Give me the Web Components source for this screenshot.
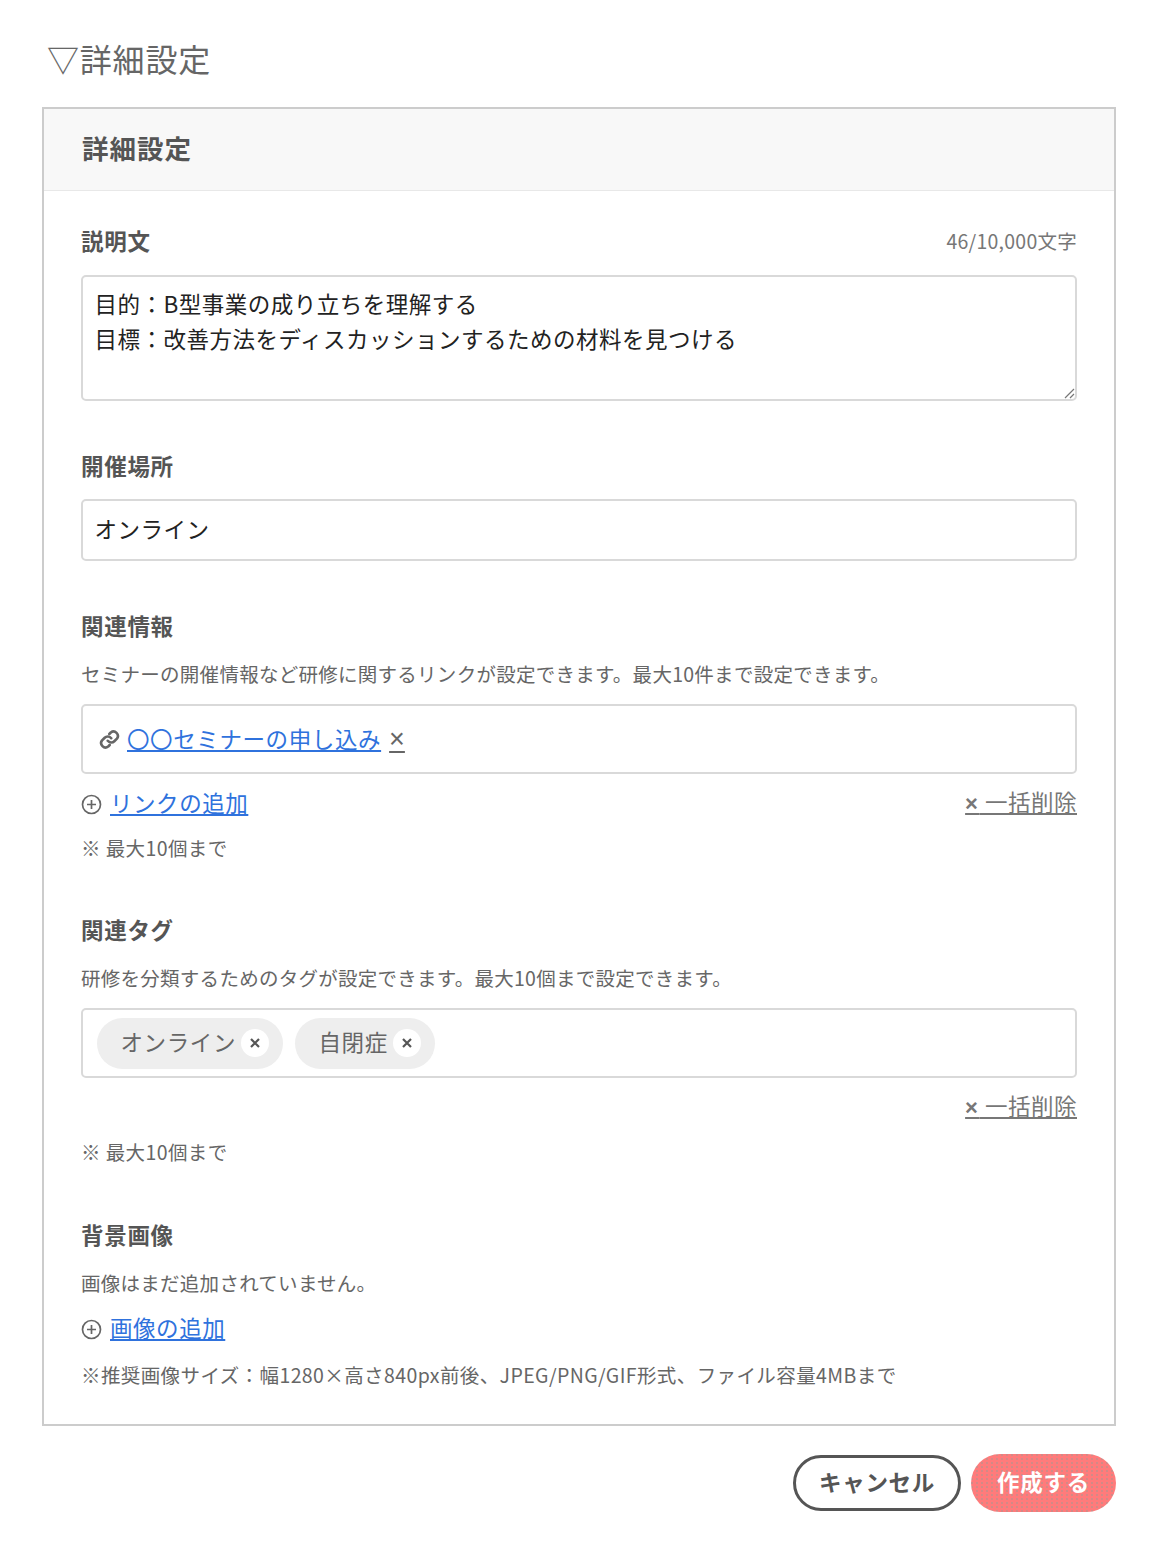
<!DOCTYPE html>
<html lang="ja"><head><meta charset="utf-8"><title>詳細設定</title>
<style>
html,body{margin:0;background:#fff}
body{font-family:"Noto Sans CJK JP","Noto Sans",sans-serif;color:#555}
</style></head><body>
<settings-page>
<settings-panel heading="詳細設定">
  <form-field label="説明文" counter="46/10,000文字" gap="18">
    <text-box multiline>目的：B型事業の成り立ちを理解する<br>目標：改善方法をディスカッションするための材料を見つける</text-box>
  </form-field>
  <form-field label="開催場所" top="51" gap="17">
    <text-box>オンライン</text-box>
  </form-field>
  <form-field label="関連情報" top="51" gap="17">
    <help-text slot="desc">セミナーの開催情報など研修に関するリンクが設定できます。最大10件まで設定できます。</help-text>
    <item-box>
      <link-item>〇〇セミナーの申し込み</link-item>
    </item-box>
    <action-row add="リンクの追加" clear></action-row>
    <help-text note>※ 最大10個まで</help-text>
  </form-field>
  <form-field label="関連タグ" top="53" gap="17">
    <help-text slot="desc">研修を分類するためのタグが設定できます。最大10個まで設定できます。</help-text>
    <item-box>
      <tag-chip>オンライン</tag-chip>
      <tag-chip>自閉症</tag-chip>
    </item-box>
    <action-row clear></action-row>
    <help-text note>※ 最大10個まで</help-text>
  </form-field>
  <form-field label="背景画像" top="54" gap="17">
    <help-text slot="desc">画像はまだ追加されていません。</help-text>
    <action-row add="画像の追加" tight></action-row>
    <help-text note last>※推奨画像サイズ：幅1280×高さ840px前後、JPEG/PNG/GIF形式、ファイル容量4MBまで</help-text>
  </form-field>
</settings-panel>
<div slot="actions" style="display:contents">
  <pill-button>キャンセル</pill-button>
  <pill-button primary>作成する</pill-button>
</div>
</settings-page>
<script>
const FONT='"Noto Sans CJK JP","Noto Sans",sans-serif';
function def(name,render){
  customElements.define(name,class extends HTMLElement{
    constructor(){super();this.attachShadow({mode:'open'})}
    connectedCallback(){this.shadowRoot.innerHTML=render(this)}
  });
}
def('settings-page',()=>`<style>
:host{display:block;padding:38px 42px 36px;font-family:${FONT}}
h1{margin:0 0 29px 5px;font-size:32px;line-height:40px;font-weight:400;color:#666;letter-spacing:.8px}
.actions{display:flex;justify-content:flex-end;align-items:center;gap:10px;margin-top:28px}
</style><h1>▽詳細設定</h1><slot></slot><div class="actions"><slot name="actions"></slot></div>`);
def('settings-panel',el=>`<style>
:host{display:block;border:2px solid #ccc}
header{height:82px;box-sizing:border-box;background:#f8f8f8;border-bottom:1px solid #e8e8e8;display:flex;align-items:center;padding:0 0 4px 38px;font-size:26.5px;font-weight:700;color:#555;letter-spacing:1px}
.body{padding:36px 37px 34px 37px;display:flow-root}
</style><header>${el.getAttribute('heading')}</header><div class="body"><slot></slot></div>`);
def('form-field',el=>`<style>
:host{display:block;margin-top:${el.getAttribute('top')||0}px}
.head{display:flex;justify-content:space-between;align-items:center;height:30px;margin-bottom:${el.getAttribute('gap')}px}
.label{font-size:22.5px;font-weight:700;color:#555;line-height:26px;padding-bottom:4px;letter-spacing:.7px}
.count{font-size:19.5px;color:#777;letter-spacing:.25px;line-height:28px;padding-bottom:2px}
::slotted([slot=desc]){margin-bottom:15px}
</style><div class="head"><span class="label">${el.getAttribute('label')}</span>${el.getAttribute('counter')?`<span class="count">${el.getAttribute('counter')}</span>`:''}</div><slot name="desc"></slot><slot></slot>`);
def('text-box',el=>`<style>
:host{display:block;position:relative;box-sizing:border-box;border:2px solid #d9d9d9;border-radius:5px;font-size:22.5px;color:#222;background:#fff;letter-spacing:.5px;
${el.hasAttribute('multiline')?'height:126px;padding:9px 11.5px;line-height:35px':'height:62px;padding:0 11.5px;line-height:55px'}}
svg{position:absolute;right:0;bottom:0}
</style><slot></slot>${el.hasAttribute('multiline')?'<svg width="11" height="11" viewBox="0 0 11 11"><path d="M1 10 10 1M6 10l4-4" stroke="#777" stroke-width="1.2" fill="none"/></svg>':''}`);
def('help-text',el=>`<style>
:host{display:block;font-size:19.5px;line-height:30px;color:#666;letter-spacing:${el.hasAttribute('note')?.4:.27}px;${el.hasAttribute('note')?`margin-top:${el.hasAttribute('last')?16:14}px;`:''}}
</style><slot></slot>`);
def('item-box',()=>`<style>
:host{display:flex;align-items:center;gap:12px;box-sizing:border-box;height:70px;border:2px solid #d9d9d9;border-radius:5px;padding:0 14px}
</style><slot></slot>`);
def('link-item',()=>`<style>
:host{display:flex;align-items:center;font-size:22.5px;padding-left:2px;line-height:30px;}
.t{padding-bottom:3px;display:flex;align-items:baseline}
a{color:#2f72dd;text-decoration:underline;text-underline-offset:2px;margin:0 8px 0 7px;letter-spacing:.6px}
.x{color:#666;font-family:"Liberation Sans",sans-serif;font-size:27px;line-height:26px;text-decoration:underline;text-decoration-thickness:1.5px;text-underline-offset:3px}
svg{display:block}
</style><svg width="21" height="21" viewBox="0 0 24 24" fill="none" stroke="#666" stroke-width="3" stroke-linecap="round" stroke-linejoin="round"><path d="M10 13.5a5 5 0 0 0 7.5.5l3-3a5 5 0 0 0-7-7l-1.7 1.7"/><path d="M14 10.5a5 5 0 0 0-7.5-.5l-3 3a5 5 0 0 0 7 7l1.7-1.7"/></svg><span class="t"><a href="#"><slot></slot></a><span class="x">×</span></span>`);
def('tag-chip',()=>`<style>
:host{display:inline-flex;align-items:center;height:51px;border-radius:26px;background:#eee;padding:0 14px 0 23.5px;font-size:22.5px;color:#666;letter-spacing:.6px;gap:5px}
span{padding-bottom:4px;line-height:30px}
i{display:flex;align-items:center;justify-content:center;width:28px;height:28px;border-radius:50%;background:#fff}
</style><span><slot></slot></span><i><svg width="10" height="10" viewBox="0 0 10 10"><path d="M1 1 9 9M9 1 1 9" stroke="#555" stroke-width="2.2"/></svg></i>`);
def('action-row',el=>{
 const add=el.getAttribute('add');
 const tight=el.hasAttribute('tight');
 return `<style>
:host{display:flex;justify-content:space-between;align-items:center;height:30px;margin-top:${tight?0:15}px;padding-top:${tight?1:0}px;font-size:22.5px;line-height:26px}
.add{display:flex;align-items:center;gap:8px}
.add a{padding-bottom:4px}
a{color:#2f72dd;text-decoration:underline;text-underline-offset:2px;letter-spacing:.55px}
.clear{color:#777;text-decoration:underline;text-underline-offset:2px;margin-left:auto;letter-spacing:.5px;padding-bottom:3px;white-space:pre}
.clear b{font-family:"Liberation Sans",sans-serif;font-size:22px;font-weight:700;letter-spacing:1.5px}
svg{display:block}
</style>${add?`<span class="add"><svg width="21" height="21" viewBox="0 0 21 21" fill="none" stroke="#666" stroke-width="1.7"><circle cx="10.5" cy="10.5" r="9"/><path d="M10.5 6v9M6 10.5h9"/></svg><a href="#">${add}</a></span>`:''}${el.hasAttribute('clear')?`<span class="clear"><b>×</b><span> 一括削除</span></span>`:''}`});
def('pill-button',el=>`<style>
:host{display:inline-flex;align-items:center;justify-content:center;box-sizing:border-box;height:${el.hasAttribute('primary')?58:56}px;border-radius:29px;font-size:22.5px;line-height:26px;font-weight:700;letter-spacing:.7px;padding-bottom:5px;
${el.hasAttribute('primary')?'width:145px;color:#fff;background-color:#ff7b7b;background-image:radial-gradient(circle at 1px 1px,rgba(110,170,160,.3) 0 .8px,transparent 1px);background-size:5px 4px;':'width:168px;color:#555;border:3px solid #555;background:#fff;'}}
</style><slot></slot>`);
</script>
</body></html>
